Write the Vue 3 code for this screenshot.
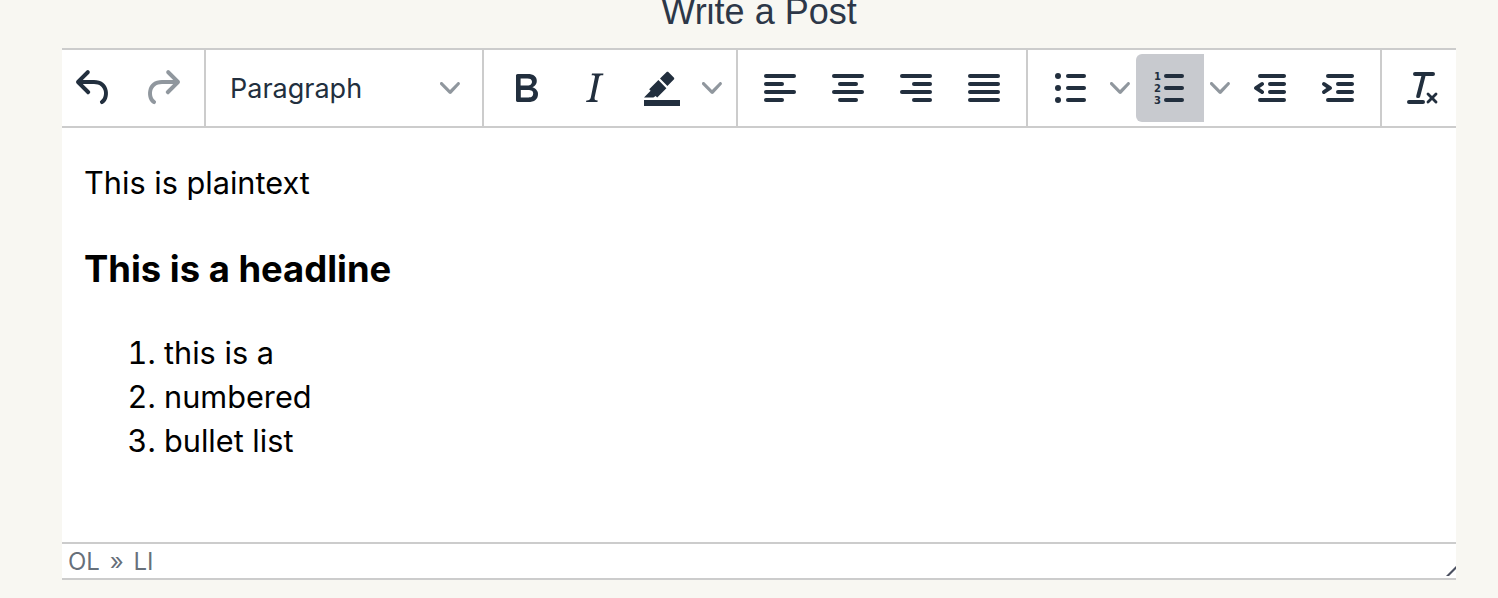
<script setup>
const aligns = [
  [[4, 16], [4, 10], [4, 16], [4, 10]],
  [[4, 16], [7, 10], [4, 16], [7, 10]],
  [[4, 16], [10, 10], [4, 16], [10, 10]],
  [[4, 16], [4, 16], [4, 16], [4, 16]],
]
const chevron = 'M8.7 2.2c.3-.3.8-.3 1 0 .4.4.4.9 0 1.2L5.7 7.8c-.3.3-.9.3-1.2 0L.2 3.4a.8.8 0 0 1 0-1.2c.3-.3.8-.3 1.1 0L5 6l3.7-3.8z'
const undo = 'M6.4 8H12c3.7 0 6.2 2 6.8 5.1.6 2.7-.4 5.6-2.3 6.8a1 1 0 0 1-1-1.8c1.1-.6 1.8-2.7 1.4-4.6-.5-2.1-2.1-3.5-4.9-3.5H6.4l3.3 3.3a1 1 0 1 1-1.4 1.4l-5-5a1 1 0 0 1 0-1.4l5-5a1 1 0 0 1 1.4 1.4L6.4 8z'
</script>

<template>
  <div class="page">
    <h1 class="title">Write a Post</h1>
    <div class="editor">
      <div class="toolbar">
        <div class="group first">
          <button class="btn"><svg class="ic" viewBox="0 0 24 24"><path :d="undo"/></svg></button>
          <button class="btn off"><svg class="ic" viewBox="0 0 24 24"><path :d="undo" transform="matrix(-1 0 0 1 24 0)"/></svg></button>
        </div>
        <div class="group select">
          <span class="sel-label">Paragraph</span>
          <svg class="chev" viewBox="0 0 10 10"><path :d="chevron"/></svg>
        </div>
        <div class="group fmt">
          <button class="btn"><svg class="ic" viewBox="0 0 24 24"><path d="M7.8 19c-.3 0-.5 0-.6-.2l-.2-.5V5.7c0-.2 0-.4.2-.5l.6-.2h5c1.5 0 2.7.3 3.5 1 .7.6 1.1 1.4 1.1 2.5a3 3 0 0 1-.6 1.9c-.4.6-1 1-1.6 1.2.4.1.9.3 1.3.6s.8.7 1 1.2c.4.4.5 1 .5 1.6 0 1.3-.4 2.3-1.3 3-.8.7-2.1 1-3.8 1H7.8zm5-8.3c.6 0 1.2-.1 1.6-.5.4-.3.6-.7.6-1.3 0-1.1-.8-1.7-2.3-1.7H9.3v3.5h3.4zm.5 6c.7 0 1.3-.1 1.7-.4.4-.4.6-.9.6-1.5s-.2-1-.7-1.4c-.4-.3-1-.4-2-.4H9.4v3.8h4z"/></svg></button>
          <button class="btn"><svg class="ic" viewBox="0 0 24 24"><path d="M16.7 4.7l-.1.9h-.3c-.6 0-1 0-1.4.3-.3.3-.4.6-.5 1.1l-2.1 9.8v.6c0 .5.4.8 1.4.8h.2l-.2.8H8l.2-.8h.2c1.1 0 1.8-.5 2-1.5l2-9.8.1-.5c0-.6-.4-.8-1.4-.8h-.3l.2-.9h5.8z"/></svg></button>
          <button class="btn"><svg class="ic" viewBox="0 0 24 24"><path d="M3 18h18v3H3z"/><path d="M7.7 16.7H3l3.3-3.3-.7-.8L10.2 8l4 4.1-4.6 4.6-.8-.7-1.1.7zm7-5.7L11 7.3l3.2-3.2c.3-.3.8-.3 1.1 0l2.6 2.6c.3.3.3.8 0 1.1L14.7 11z"/></svg></button>
          <button class="caret"><svg class="chev" viewBox="0 0 10 10"><path :d="chevron"/></svg></button>
        </div>
        <div class="group aligns">
          <button v-for="(rows, i) in aligns" :key="i" class="btn">
            <svg class="ic" viewBox="0 0 24 24">
              <rect v-for="(r, j) in rows" :key="j" :x="r[0]" :y="5 + j * 4" :width="r[1]" height="2" rx="1"/>
            </svg>
          </button>
        </div>
        <div class="group lists">
          <button class="btn"><svg class="ic" viewBox="0 0 24 24"><rect x="10" y="5" width="10" height="2" rx="1"/><rect x="10" y="11" width="10" height="2" rx="1"/><rect x="10" y="17" width="10" height="2" rx="1"/><circle cx="6" cy="6" r="1.5"/><circle cx="6" cy="12" r="1.5"/><circle cx="6" cy="18" r="1.5"/></svg></button>
          <button class="caret"><svg class="chev" viewBox="0 0 10 10"><path :d="chevron"/></svg></button>
          <button class="btn active"><svg class="ic" viewBox="0 0 24 24"><rect x="9" y="5" width="10" height="2" rx="1"/><rect x="9" y="11" width="10" height="2" rx="1"/><rect x="9" y="17" width="10" height="2" rx="1"/><g class="nums"><text x="7.5" y="7.8">1</text><text x="7.5" y="13.8">2</text><text x="7.5" y="19.8">3</text></g></svg></button>
          <button class="caret"><svg class="chev" viewBox="0 0 10 10"><path :d="chevron"/></svg></button>
          <button class="btn"><svg class="ic" viewBox="0 0 24 24"><path d="M7 5h12c.6 0 1 .4 1 1s-.4 1-1 1H7a1 1 0 1 1 0-2zm5 4h7c.6 0 1 .4 1 1s-.4 1-1 1h-7a1 1 0 0 1 0-2zm0 4h7c.6 0 1 .4 1 1s-.4 1-1 1h-7a1 1 0 0 1 0-2zm-5 4h12a1 1 0 0 1 0 2H7a1 1 0 0 1 0-2zm1.6-3.8a1 1 0 0 1-1.2 1.6l-3-2a1 1 0 0 1 0-1.6l3-2a1 1 0 0 1 1.2 1.6L6.8 12l1.8 1.2z"/></svg></button>
          <button class="btn"><svg class="ic" viewBox="0 0 24 24"><path d="M7 5h12c.6 0 1 .4 1 1s-.4 1-1 1H7a1 1 0 1 1 0-2zm5 4h7c.6 0 1 .4 1 1s-.4 1-1 1h-7a1 1 0 0 1 0-2zm0 4h7c.6 0 1 .4 1 1s-.4 1-1 1h-7a1 1 0 0 1 0-2zm-5 4h12a1 1 0 0 1 0 2H7a1 1 0 0 1 0-2zm-2.6-3.8L6.2 12l-1.8-1.2a1 1 0 0 1 1.2-1.6l3 2a1 1 0 0 1 0 1.6l-3 2a1 1 0 1 1-1.2-1.6z"/></svg></button>
        </div>
        <div class="group last">
          <button class="btn"><svg class="ic" viewBox="0 0 24 24"><path d="M13.2 6a1 1 0 0 1 0 .2l-2.6 10a1 1 0 0 1-1 .8h-.2a.8.8 0 0 1-.8-1l2.6-10H8a1 1 0 1 1 0-2h9a1 1 0 0 1 0 2h-3.8zM5 18h7a1 1 0 0 1 0 2H5a1 1 0 0 1 0-2zm13 1.5L16.5 18 15 19.5a.7.7 0 0 1-1-1l1.5-1.5-1.5-1.5a.7.7 0 0 1 1-1l1.5 1.5 1.5-1.5a.7.7 0 0 1 1 1L17.5 17l1.5 1.5a.7.7 0 0 1-1 1z"/></svg></button>
        </div>
      </div>
      <div class="content">
        <p class="plain">This is plaintext</p>
        <h2 class="head">This is a headline</h2>
        <ol class="list">
          <li>this is a</li>
          <li>numbered</li>
          <li>bullet list</li>
        </ol>
      </div>
      <div class="status">
        <span>OL » LI</span>
        <svg class="grip" viewBox="0 0 10 10"><path d="M0 10 L10 0 V3 L3 10 Z"/></svg>
      </div>
    </div>
  </div>
</template>

<style scoped>
.page {
  width: 1498px;
  height: 598px;
  overflow: hidden;
  background: #f8f7f2;
  padding: 0 42px 0 62px;
  box-sizing: border-box;
}
.title {
  margin: -10px 0 0;
  height: 58px;
  font: 400 36px/44px "Liberation Sans", Arial, sans-serif;
  color: #2d3748;
  text-align: center;
}
.editor {
  background: #fff;
  height: 532px;
  display: flex;
  flex-direction: column;
  overflow: hidden;
  border-top: 2px solid #ccc;
  border-bottom: 2px solid #ccc;
  box-sizing: border-box;
}
.toolbar {
  display: flex;
  height: 78px;
  box-sizing: border-box;
  flex: none;
  border-bottom: 2px solid #ccc;
  overflow: hidden;
}
.group {
  display: flex;
  align-items: center;
  flex: none;
  box-sizing: border-box;
  border-right: 2px solid #ccc;
  height: 76px;
}
.first { width: 144px; }
.first .btn:first-child { margin-left: -2px; }
.select {
  width: 278px;
  padding: 0 22px 0 24px;
  justify-content: space-between;
  font: 400 27px/40px Inter, sans-serif;
  color: #222f3e;
}
.sel-label { padding-top: 2px; }
.fmt { width: 254px; padding-left: 8px; }
.aligns { width: 290px; padding-left: 8px; }
.lists { width: 354px; padding-left: 8px; }
.last { border-right: 0; padding-left: 7px; }
.btn, .caret {
  border: 0;
  padding: 0;
  background: transparent;
  display: flex;
  align-items: center;
  justify-content: center;
  height: 68px;
  flex: none;
}
.btn { width: 68px; border-radius: 6px; }
.caret { width: 32px; }
.active { background: #c8cacf; border-radius: 6px 0 0 6px; }
.ic { width: 48px; height: 48px; fill: #222f3e; display: block; }
.off .ic { fill: rgba(34, 47, 62, 0.5); }
.chev { width: 20px; height: 20px; fill: rgba(34, 47, 62, 0.5); display: block; }
.nums text {
  font: 700 5px "DejaVu Sans", sans-serif;
  text-anchor: end;
  fill: #222f3e;
}
.content {
  flex: 1;
  padding: 0 22px;
  font: 400 30.7px/44px Inter, sans-serif;
  color: #000;
}
.plain { margin: 33px 0 0; }
.head {
  margin: 42px 0 0;
  font: 700 36.4px/44px Inter, sans-serif;
}
.list { margin: 40px 0 0; padding-left: 80px; }
.status {
  flex: none;
  height: 36px;
  border-top: 2px solid #ccc;
  box-sizing: border-box;
  padding: 2px 6px 0;
  display: flex;
  align-items: center;
  justify-content: space-between;
  font: 400 24px/32px Inter, sans-serif;
  word-spacing: 3px;
  color: rgba(34, 47, 62, 0.7);
  position: relative;
}
.grip {
  position: absolute;
  right: 0;
  bottom: 2px;
  width: 10px;
  height: 10px;
  fill: #4b5060;
}
</style>
